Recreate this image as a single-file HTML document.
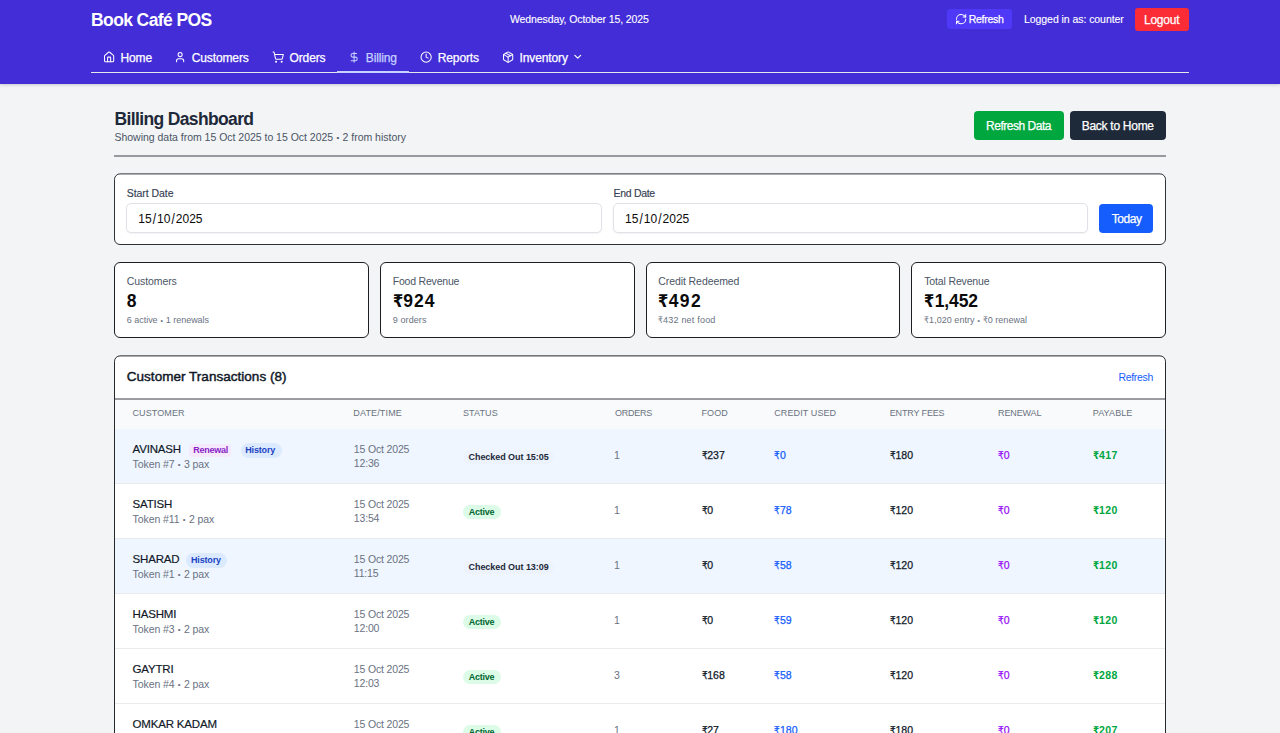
<!DOCTYPE html>
<html lang="en">
<head>
<meta charset="utf-8">
<title>Book Café POS - Billing Dashboard</title>
<style>
*{box-sizing:border-box;margin:0;padding:0}
html,body{width:1280px;height:733px;overflow:hidden}
body{background:#f3f4f6;font-family:"Liberation Sans","DejaVu Sans",sans-serif;color:#101828;position:relative}
.t{position:absolute;white-space:nowrap;line-height:1;display:block}
.b{position:absolute;display:block}
.d{display:inline-block;width:.47em;text-align:center;font-size:.75em;vertical-align:.09em;letter-spacing:0}
.sl{margin:0 1.05px;display:inline-block;transform:scaleY(1.15)}
.r{display:inline-block;transform:scaleX(.84);transform-origin:0 50%;margin-right:-.1em;letter-spacing:0}
svg.i{position:absolute;fill:none;stroke:currentColor;stroke-width:2;stroke-linecap:round;stroke-linejoin:round;overflow:visible}
.brand{font-size:17.5px;font-weight:700;color:#fff;letter-spacing:-0.6px;}
.h10{font-size:10.5px;font-weight:400;color:#fff;letter-spacing:-0.1px;-webkit-text-stroke:.12px #fff}
.h10m{font-size:10.5px;font-weight:400;color:#fff;letter-spacing:-0.3px;-webkit-text-stroke:.25px #fff}
.nav{font-size:12px;font-weight:400;color:#fff;letter-spacing:-0.12px;-webkit-text-stroke:.25px #fff}
.navact{font-size:12px;font-weight:400;color:#c6d2ff;letter-spacing:-0.12px;-webkit-text-stroke:.25px #c6d2ff}
.btn{font-size:12px;font-weight:400;color:#fff;letter-spacing:-0.48px;-webkit-text-stroke:.25px #fff}
.title{font-size:17.5px;font-weight:700;color:#1e2939;letter-spacing:-0.64px;}
.sub{font-size:10.5px;font-weight:400;color:#4a5565;letter-spacing:-0.02px;}
.lab{font-size:10.5px;font-weight:400;color:#364153;letter-spacing:-0.05px;-webkit-text-stroke:.15px #364153}
.inp{font-size:12px;font-weight:400;color:#0a0a0a;letter-spacing:0.45px;}
.slab{font-size:10.5px;font-weight:400;color:#4a5565;letter-spacing:-0.08px;}
.snum{font-size:17.5px;font-weight:700;color:#0a0a0a;letter-spacing:1.1px;}
.ssm{font-size:9px;font-weight:400;color:#6a7282;letter-spacing:-0.02px;}
.ct{font-size:13.5px;font-weight:400;color:#101828;letter-spacing:0.03px;-webkit-text-stroke:.45px #101828}
.lnk{font-size:10.5px;font-weight:400;color:#155dfc;letter-spacing:-0.33px;}
.th{font-size:9px;font-weight:400;color:#6a7282;letter-spacing:0.1px;}
.name{font-size:11.5px;font-weight:400;color:#101828;letter-spacing:-0.17px;-webkit-text-stroke:.17px #101828}
.tok{font-size:10.5px;font-weight:400;color:#6a7282;letter-spacing:-0.07px;}
.dt{font-size:10.5px;font-weight:400;color:#6a7282;letter-spacing:-0.15px;}
.bdg{font-size:9px;font-weight:700;color:#016630;letter-spacing:-0.25px;}
.num{font-size:10.5px;font-weight:400;color:#101828;letter-spacing:0.1px;-webkit-text-stroke:.25px currentColor}
.numb{font-size:10.5px;font-weight:700;color:#00a63e;letter-spacing:0.35px;}
</style>
</head>
<body>
<div class="b" style="left:0px;top:0px;width:1280px;height:84px;background:#432dd7;box-shadow:0 1px 3px rgba(0,0,0,.18)"></div>
<span class="t brand" style="left:91px;top:12.19px">Book Café POS</span>
<span class="t h10" style="left:510px;top:14.36px">Wednesday, October 15, 2025</span>
<div class="b" style="left:947px;top:9px;width:65px;height:20px;background:#4f39f6;border-radius:3px"></div>
<svg class="i" viewBox="0 0 24 24" style="left:954.5px;top:13.4px;width:12.25px;height:12.25px;color:#fff"><path d="M3 12a9 9 0 0 1 9-9 9.75 9.75 0 0 1 6.74 2.74L21 8"/><path d="M21 3v5h-5"/><path d="M21 12a9 9 0 0 1-9 9 9.75 9.75 0 0 1-6.74-2.74L3 16"/><path d="M8 16H3v5"/></svg>
<span class="t h10m" style="left:968.75px;top:14.36px">Refresh</span>
<span class="t h10" style="left:1024px;top:14.36px;letter-spacing:-0.06px">Logged in as: counter</span>
<div class="b" style="left:1135px;top:8px;width:53.6px;height:23px;background:#fb2c36;border-radius:3px"></div>
<span class="t btn" style="left:1144px;top:13.84px;letter-spacing:-0.24px">Logout</span>
<svg class="i" viewBox="0 0 24 24" style="left:103.0px;top:51.3px;width:12.25px;height:12.25px;color:#fff"><path d="M15 21v-8a1 1 0 0 0-1-1h-4a1 1 0 0 0-1 1v8"/><path d="M3 10a2 2 0 0 1 .709-1.528l7-5.999a2 2 0 0 1 2.582 0l7 5.999A2 2 0 0 1 21 10v9a2 2 0 0 1-2 2H5a2 2 0 0 1-2-2z"/></svg>
<span class="t nav" style="left:120.5px;top:51.59px">Home</span>
<svg class="i" viewBox="0 0 24 24" style="left:174.25px;top:51.3px;width:12.25px;height:12.25px;color:#fff"><path d="M19 21v-2a4 4 0 0 0-4-4H9a4 4 0 0 0-4 4v2"/><circle cx="12" cy="7" r="4"/></svg>
<span class="t nav" style="left:191.75px;top:51.59px">Customers</span>
<svg class="i" viewBox="0 0 24 24" style="left:272.0px;top:51.3px;width:12.25px;height:12.25px;color:#fff"><circle cx="8" cy="21" r="1"/><circle cx="19" cy="21" r="1"/><path d="M2.05 2.05h2l2.66 12.42a2 2 0 0 0 2 1.58h9.78a2 2 0 0 0 1.95-1.57l1.65-7.43H5.12"/></svg>
<span class="t nav" style="left:289.5px;top:51.59px">Orders</span>
<svg class="i" viewBox="0 0 24 24" style="left:348.25px;top:51.3px;width:12.25px;height:12.25px;color:#c6d2ff"><line x1="12" x2="12" y1="2" y2="22"/><path d="M17 5H9.5a3.5 3.5 0 0 0 0 7h5a3.5 3.5 0 0 1 0 7H6"/></svg>
<span class="t navact" style="left:365.75px;top:51.59px">Billing</span>
<svg class="i" viewBox="0 0 24 24" style="left:420.25px;top:51.3px;width:12.25px;height:12.25px;color:#fff"><circle cx="12" cy="12" r="10"/><polyline points="12 6 12 12 16 14"/></svg>
<span class="t nav" style="left:437.75px;top:51.59px">Reports</span>
<svg class="i" viewBox="0 0 24 24" style="left:502.0px;top:51.3px;width:12.25px;height:12.25px;color:#fff"><path d="m7.5 4.27 9 5.15"/><path d="M21 8a2 2 0 0 0-1-1.73l-7-4a2 2 0 0 0-2 0l-7 4A2 2 0 0 0 3 8v8a2 2 0 0 0 1 1.73l7 4a2 2 0 0 0 2 0l7-4A2 2 0 0 0 21 16Z"/><path d="m3.3 7 8.7 5 8.7-5"/><path d="M12 22V12"/></svg>
<span class="t nav" style="left:519.5px;top:51.59px">Inventory</span>
<svg class="i" viewBox="0 0 24 24" style="left:571.5px;top:50.65px;width:11.5px;height:11.5px;color:#fff;stroke-width:2.5"><path d="m6 9 6 6 6-6"/></svg>
<div class="b" style="left:91px;top:72px;width:1098px;height:1px;background:#e5e7eb"></div>
<div class="b" style="left:337px;top:71px;width:72px;height:2px;background:#c6d2ff"></div>
<span class="t title" style="left:114.5px;top:111.19px">Billing Dashboard</span>
<span class="t sub" style="left:114.5px;top:131.86px">Showing data from 15 Oct 2025 to 15 Oct 2025 <span class="d">•</span> 2 from history</span>
<div class="b" style="left:974.4px;top:111px;width:89.6px;height:29px;background:#00a63e;border-radius:4px"></div>
<span class="t btn" style="left:986px;top:120.09px">Refresh Data</span>
<div class="b" style="left:1070px;top:111px;width:96px;height:29px;background:#1e2939;border-radius:4px"></div>
<span class="t btn" style="left:1081.75px;top:120.09px;letter-spacing:-0.28px">Back to Home</span>
<div class="b" style="left:114px;top:155px;width:1052px;height:2px;background:#96999d"></div>
<svg class="b" style="left:0;top:0;overflow:visible" width="1280" height="733"><rect x="114.5" y="173.9" width="1051" height="70.6" rx="5.5" fill="#fff" stroke="#2e3238"/></svg>
<span class="t lab" style="left:126.75px;top:188.11px">Start Date</span>
<span class="t lab" style="left:613.5px;top:188.11px;letter-spacing:-0.3px">End Date</span>
<div class="b" style="left:126px;top:203px;width:475.5px;height:30px;background:#fff;border:1px solid #dfe2e7;border-radius:5px;box-shadow:0 1px 2px rgba(0,0,0,.05)"></div>
<div class="b" style="left:613px;top:203px;width:474.5px;height:30px;background:#fff;border:1px solid #dfe2e7;border-radius:5px;box-shadow:0 1px 2px rgba(0,0,0,.05)"></div>
<span class="t inp" style="left:138.25px;top:212.54px;letter-spacing:0px">15<span class="sl">/</span>10<span class="sl">/</span>2025</span>
<span class="t inp" style="left:625px;top:212.54px;letter-spacing:0px">15<span class="sl">/</span>10<span class="sl">/</span>2025</span>
<div class="b" style="left:1099px;top:204px;width:54.4px;height:29px;background:#155dfc;border-radius:4px"></div>
<span class="t btn" style="left:1111.75px;top:213.24px;letter-spacing:-0.42px">Today</span>
<div class="b" style="left:114px;top:262px;width:254.75px;height:76px;background:#fff;border:1px solid #1c1e21;border-radius:6px"></div>
<span class="t slab" style="left:126.75px;top:276.11px;letter-spacing:-0.08px">Customers</span>
<span class="t snum" style="left:126.75px;top:293.19px;letter-spacing:1.1px">8</span>
<span class="t ssm" style="left:126.75px;top:316.38px;letter-spacing:-0.02px">6 active <span class="d">•</span> 1 renewals</span>
<div class="b" style="left:379.75px;top:262px;width:254.75px;height:76px;background:#fff;border:1px solid #1c1e21;border-radius:6px"></div>
<span class="t slab" style="left:392.75px;top:276.11px;letter-spacing:-0.2px">Food Revenue</span>
<span class="t snum" style="left:392.75px;top:293.19px;letter-spacing:1.1px"><span class="r">₹</span>924</span>
<span class="t ssm" style="left:392.75px;top:316.38px;letter-spacing:0.1px">9 orders</span>
<div class="b" style="left:645.5px;top:262px;width:254.75px;height:76px;background:#fff;border:1px solid #1c1e21;border-radius:6px"></div>
<span class="t slab" style="left:658.25px;top:276.11px;letter-spacing:-0.08px">Credit Redeemed</span>
<span class="t snum" style="left:658.25px;top:293.19px;letter-spacing:1.4px"><span class="r">₹</span>492</span>
<span class="t ssm" style="left:658.25px;top:316.38px;letter-spacing:0.2px"><span class="r">₹</span>432 net food</span>
<div class="b" style="left:911px;top:262px;width:254.75px;height:76px;background:#fff;border:1px solid #1c1e21;border-radius:6px"></div>
<span class="t slab" style="left:924.25px;top:276.11px;letter-spacing:-0.15px">Total Revenue</span>
<span class="t snum" style="left:924.25px;top:293.19px;letter-spacing:-0.1px"><span class="r">₹</span>1,452</span>
<span class="t ssm" style="left:924.25px;top:316.38px;letter-spacing:0.04px"><span class="r">₹</span>1,020 entry <span class="d">•</span> <span class="r">₹</span>0 renewal</span>
<svg class="b" style="left:0;top:0;overflow:visible" width="1280" height="733"><rect x="114.5" y="355.9" width="1051" height="399" rx="5.5" fill="#fff" stroke="#26282c"/></svg>
<span class="t ct" style="left:126.75px;top:369.82px">Customer Transactions (8)</span>
<span class="t lnk" style="left:1118.5px;top:371.86px">Refresh</span>
<div class="b" style="left:115px;top:398px;width:1050px;height:2px;background:#9a9c9f"></div>
<div class="b" style="left:115px;top:400px;width:1050px;height:28.5px;background:#f9fafb"></div>
<span class="t th" style="left:132.5px;top:409.38px">CUSTOMER</span>
<span class="t th" style="left:353.25px;top:409.38px;letter-spacing:0.15px">DATE/TIME</span>
<span class="t th" style="left:463px;top:409.38px">STATUS</span>
<span class="t th" style="left:615px;top:409.38px;letter-spacing:-0.25px">ORDERS</span>
<span class="t th" style="left:701.5px;top:409.38px">FOOD</span>
<span class="t th" style="left:774.25px;top:409.38px">CREDIT USED</span>
<span class="t th" style="left:889.75px;top:409.38px;letter-spacing:-0.15px">ENTRY FEES</span>
<span class="t th" style="left:998px;top:409.38px;letter-spacing:-0.12px">RENEWAL</span>
<span class="t th" style="left:1092.75px;top:409.38px">PAYABLE</span>
<div class="b" style="left:115px;top:428.5px;width:1050px;height:55px;background:#eff6ff"></div>
<span class="t name" style="left:132.5px;top:444.17px">AVINASH</span>
<div class="b" style="left:189.25px;top:443.5px;width:42px;height:13.5px;background:#f5e9fd;border-radius:3px"></div>
<span class="t bdg" style="left:193.25px;top:445.63px;letter-spacing:-0.27px;color:#8a1fc4">Renewal</span>
<div class="b" style="left:240.5px;top:443.0px;width:41px;height:14.5px;background:#dbeafe;border-radius:8px"></div>
<span class="t bdg" style="left:245.25px;top:445.63px;letter-spacing:-0.17px;color:#1a43c4">History</span>
<span class="t tok" style="left:132.5px;top:459.11px">Token #7 <span class="d">•</span> 3 pax</span>
<span class="t dt" style="left:353.75px;top:443.91px">15 Oct 2025</span>
<span class="t dt" style="left:353.75px;top:458.11px">12:36</span>
<div class="b" style="left:463px;top:450.0px;width:91px;height:14px;background:#edf3fd;border-radius:7px"></div>
<span class="t bdg" style="left:468.5px;top:453.38px;letter-spacing:-0.05px;color:#1e2939">Checked Out 15:05</span>
<span class="t dt" style="left:614px;top:450.01px">1</span>
<span class="t num" style="left:701.5px;top:450.01px"><span class="r">₹</span>237</span>
<span class="t num" style="left:774.25px;top:450.01px;color:#155dfc"><span class="r">₹</span>0</span>
<span class="t num" style="left:889.75px;top:450.01px"><span class="r">₹</span>180</span>
<span class="t num" style="left:998px;top:450.01px;color:#9810fa"><span class="r">₹</span>0</span>
<span class="t numb" style="left:1092.75px;top:450.01px"><span class="r">₹</span>417</span>
<div class="b" style="left:115px;top:483.0px;width:1050px;height:1px;background:#e9ebee"></div>
<span class="t name" style="left:132.5px;top:499.17px">SATISH</span>
<span class="t tok" style="left:132.5px;top:514.11px">Token #11 <span class="d">•</span> 2 pax</span>
<span class="t dt" style="left:353.75px;top:498.91px">15 Oct 2025</span>
<span class="t dt" style="left:353.75px;top:513.11px">13:54</span>
<div class="b" style="left:463px;top:505.0px;width:37.5px;height:14px;background:#dcfce7;border-radius:7px"></div>
<span class="t bdg" style="left:468.75px;top:508.38px">Active</span>
<span class="t dt" style="left:614px;top:505.01px">1</span>
<span class="t num" style="left:701.5px;top:505.01px"><span class="r">₹</span>0</span>
<span class="t num" style="left:774.25px;top:505.01px;color:#155dfc"><span class="r">₹</span>78</span>
<span class="t num" style="left:889.75px;top:505.01px"><span class="r">₹</span>120</span>
<span class="t num" style="left:998px;top:505.01px;color:#9810fa"><span class="r">₹</span>0</span>
<span class="t numb" style="left:1092.75px;top:505.01px"><span class="r">₹</span>120</span>
<div class="b" style="left:115px;top:538.5px;width:1050px;height:55px;background:#eff6ff"></div>
<div class="b" style="left:115px;top:538.0px;width:1050px;height:1px;background:#e9ebee"></div>
<span class="t name" style="left:132.5px;top:554.17px">SHARAD</span>
<div class="b" style="left:186.25px;top:553.0px;width:41px;height:14.5px;background:#dbeafe;border-radius:8px"></div>
<span class="t bdg" style="left:191.0px;top:555.63px;letter-spacing:-0.17px;color:#1a43c4">History</span>
<span class="t tok" style="left:132.5px;top:569.11px">Token #1 <span class="d">•</span> 2 pax</span>
<span class="t dt" style="left:353.75px;top:553.91px">15 Oct 2025</span>
<span class="t dt" style="left:353.75px;top:568.11px">11:15</span>
<div class="b" style="left:463px;top:560.0px;width:91px;height:14px;background:#edf3fd;border-radius:7px"></div>
<span class="t bdg" style="left:468.5px;top:563.38px;letter-spacing:-0.05px;color:#1e2939">Checked Out 13:09</span>
<span class="t dt" style="left:614px;top:560.01px">1</span>
<span class="t num" style="left:701.5px;top:560.01px"><span class="r">₹</span>0</span>
<span class="t num" style="left:774.25px;top:560.01px;color:#155dfc"><span class="r">₹</span>58</span>
<span class="t num" style="left:889.75px;top:560.01px"><span class="r">₹</span>120</span>
<span class="t num" style="left:998px;top:560.01px;color:#9810fa"><span class="r">₹</span>0</span>
<span class="t numb" style="left:1092.75px;top:560.01px"><span class="r">₹</span>120</span>
<div class="b" style="left:115px;top:593.0px;width:1050px;height:1px;background:#e9ebee"></div>
<span class="t name" style="left:132.5px;top:609.17px">HASHMI</span>
<span class="t tok" style="left:132.5px;top:624.11px">Token #3 <span class="d">•</span> 2 pax</span>
<span class="t dt" style="left:353.75px;top:608.91px">15 Oct 2025</span>
<span class="t dt" style="left:353.75px;top:623.11px">12:00</span>
<div class="b" style="left:463px;top:615.0px;width:37.5px;height:14px;background:#dcfce7;border-radius:7px"></div>
<span class="t bdg" style="left:468.75px;top:618.38px">Active</span>
<span class="t dt" style="left:614px;top:615.01px">1</span>
<span class="t num" style="left:701.5px;top:615.01px"><span class="r">₹</span>0</span>
<span class="t num" style="left:774.25px;top:615.01px;color:#155dfc"><span class="r">₹</span>59</span>
<span class="t num" style="left:889.75px;top:615.01px"><span class="r">₹</span>120</span>
<span class="t num" style="left:998px;top:615.01px;color:#9810fa"><span class="r">₹</span>0</span>
<span class="t numb" style="left:1092.75px;top:615.01px"><span class="r">₹</span>120</span>
<div class="b" style="left:115px;top:648.0px;width:1050px;height:1px;background:#e9ebee"></div>
<span class="t name" style="left:132.5px;top:664.17px">GAYTRI</span>
<span class="t tok" style="left:132.5px;top:679.11px">Token #4 <span class="d">•</span> 2 pax</span>
<span class="t dt" style="left:353.75px;top:663.91px">15 Oct 2025</span>
<span class="t dt" style="left:353.75px;top:678.11px">12:03</span>
<div class="b" style="left:463px;top:670.0px;width:37.5px;height:14px;background:#dcfce7;border-radius:7px"></div>
<span class="t bdg" style="left:468.75px;top:673.38px">Active</span>
<span class="t dt" style="left:614px;top:670.01px">3</span>
<span class="t num" style="left:701.5px;top:670.01px"><span class="r">₹</span>168</span>
<span class="t num" style="left:774.25px;top:670.01px;color:#155dfc"><span class="r">₹</span>58</span>
<span class="t num" style="left:889.75px;top:670.01px"><span class="r">₹</span>120</span>
<span class="t num" style="left:998px;top:670.01px;color:#9810fa"><span class="r">₹</span>0</span>
<span class="t numb" style="left:1092.75px;top:670.01px"><span class="r">₹</span>288</span>
<div class="b" style="left:115px;top:703.0px;width:1050px;height:1px;background:#e9ebee"></div>
<span class="t name" style="left:132.5px;top:719.17px">OMKAR KADAM</span>
<span class="t tok" style="left:132.5px;top:734.11px">Token #5 <span class="d">•</span> 3 pax</span>
<span class="t dt" style="left:353.75px;top:718.91px">15 Oct 2025</span>
<span class="t dt" style="left:353.75px;top:733.11px">12:10</span>
<div class="b" style="left:463px;top:725.0px;width:37.5px;height:14px;background:#dcfce7;border-radius:7px"></div>
<span class="t bdg" style="left:468.75px;top:728.38px">Active</span>
<span class="t dt" style="left:614px;top:725.01px">1</span>
<span class="t num" style="left:701.5px;top:725.01px"><span class="r">₹</span>27</span>
<span class="t num" style="left:774.25px;top:725.01px;color:#155dfc"><span class="r">₹</span>180</span>
<span class="t num" style="left:889.75px;top:725.01px"><span class="r">₹</span>180</span>
<span class="t num" style="left:998px;top:725.01px;color:#9810fa"><span class="r">₹</span>0</span>
<span class="t numb" style="left:1092.75px;top:725.01px"><span class="r">₹</span>207</span>
</body>
</html>
